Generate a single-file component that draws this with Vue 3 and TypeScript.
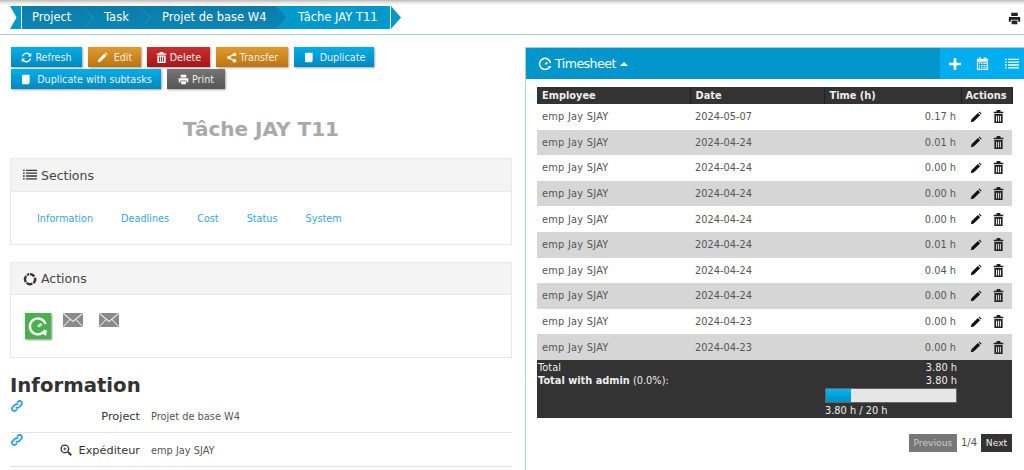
<template>
  <div class="page">
    <div class="topbar">
      <div class="crumbs">
        <span class="crumb-start"></span>
        <a v-for="(c, i) in crumbs" :key="c" class="crumb" :class="{ last: i === crumbs.length - 1 }">{{ c }}</a>
        <span class="crumb-end"></span>
      </div>
      <svg class="top-print" viewBox="0 0 16 16" width="13" height="13"><path :d="icons.print" fill="#222" /></svg>
    </div>

    <div class="columns">
      <div class="left">
        <div class="buttons">
          <a
            v-for="b in buttons"
            :key="b.label"
            class="btn"
            :class="[b.color, { spaced: b.spaced }]"
            :style="{ width: b.width + 'px' }"
          >
            <svg viewBox="0 0 16 16" width="11" height="11"><path :d="icons[b.icon]" fill="#fff" /></svg>
            {{ b.label }}
          </a>
        </div>

        <h2 class="title">Tâche JAY T11</h2>

        <section class="card sections">
          <header>
            <svg viewBox="0 0 16 16" width="14" height="14"><path :d="icons.list" fill="#333" /></svg>
            Sections
          </header>
          <nav class="links">
            <a v-for="l in links" :key="l">{{ l }}</a>
          </nav>
        </section>

        <section class="card actions">
          <header>
            <svg viewBox="0 0 16 16" width="14" height="14">
              <path d="M8 1a7 7 0 0 1 6 3.400L11.600 6A4.300 4.300 0 0 0 8 3.800zM15 6.200a7 7 0 0 1-2.300 7.500L11 11.600a4.300 4.300 0 0 0 1.200-4.700zM11.300 14.300a7 7 0 0 1-8 -.9L5 11.400a4.300 4.300 0 0 0 5 .6zM2.300 12.400A7 7 0 0 1 2.700 3.800l2 1.700a4.300 4.300 0 0 0-.2 5.200zM3.800 2.800a7 7 0 0 1 3.200-1.700v2.800a4.300 4.300 0 0 0-1.500.7z" fill="#333" />
            </svg>
            Actions
          </header>
          <div class="action-icons">
            <a class="green">
              <svg viewBox="0 0 26 26" width="26" height="26" fill="none" stroke="#fff" stroke-width="2.400">
                <path d="M20 17a8 8 0 1 1 .5-6" />
                <path d="M13 13.500l3.500-2.500" />
                <path d="M16 19.500l6-2.500-1 6z" stroke-width="0" fill="#fff" />
              </svg>
            </a>
            <svg v-for="n in 2" :key="n" class="mail" viewBox="0 0 20 14" width="20" height="14">
              <rect width="20" height="14" fill="#8a8a8a" />
              <path d="M0.500 0.500L10 8.500L19.500 0.500M0.500 13.500L7 6.500M19.500 13.500L13 6.500" fill="none" stroke="#e8e8e8" stroke-width="1.100" />
            </svg>
          </div>
        </section>

        <h2 class="info-title">Information</h2>
        <div v-for="f in fields" :key="f.label" class="field">
          <svg class="chain" viewBox="0 0 16 16" width="12" height="12">
            <path d="M6.500 9.500a3 3 0 0 0 4.300 0l3-3a3 3 0 0 0-4.300-4.300L8 3.700M9.500 6.500a3 3 0 0 0-4.300 0l-3 3a3 3 0 0 0 4.300 4.300L8 12.300" fill="none" stroke="#2a9fd6" stroke-width="2.200" />
          </svg>
          <div class="field-label">
            <svg v-if="f.search" viewBox="0 0 16 16" width="12" height="12" fill="none" stroke="#333" stroke-width="1.800">
              <circle cx="6.500" cy="6.500" r="5" />
              <path d="M10.500 10.500L15 15" stroke-width="2.600" />
              <path d="M4.500 6.500h4M6.500 4.500v4" stroke-width="1.200" />
            </svg>
            {{ f.label }}
          </div>
          <div class="field-value">{{ f.value }}</div>
        </div>
      </div>

      <div class="right">
        <div class="panel-head">
          <div class="panel-title">
            <svg viewBox="0 0 16 16" width="14" height="14" fill="none" stroke="#fff" stroke-width="1.700">
              <path d="M13.800 10.500A6.300 6.300 0 1 1 14.300 7" />
              <path d="M8 8.500l3-2.200" />
              <path d="M11.500 10.500h4l-2 3z" fill="#fff" stroke="none" />
            </svg>
            Timesheet
            <span class="caret"></span>
          </div>
          <div class="panel-tools">
            <svg viewBox="0 0 14 14" width="12" height="12"><path d="M5.500 0h3v5.500H14v3H8.500V14h-3V8.500H0v-3h5.500z" fill="#fff" /></svg>
            <svg viewBox="0 0 14 14" width="13" height="13"><path d="M1 2h2V0.500h2V2h4V0.500h2V2h2v12H1zM2 5v8h10V5zM3 6h1.500v1.500H3zM5.500 6H7v1.500H5.500zM8 6h1.500v1.500H8zM10 6h1.500v1.500H10zM3 8.500h1.500V10H3zM5.500 8.500H7V10H5.500zM8 8.500h1.500V10H8zM10 8.500h1.500V10H10zM3 11h1.500v1.500H3zM5.500 11H7v1.500H5.500zM8 11h1.500v1.500H8zM10 11h1.500v1.500H10z" fill="#fff" fill-rule="evenodd" /></svg>
            <svg viewBox="0 0 16 16" width="14" height="14"><path :d="icons.list" fill="#fff" /></svg>
          </div>
        </div>

        <div class="panel-body">
          <table class="sheet">
            <thead>
              <tr>
                <th class="c-emp">Employee</th>
                <th class="c-date">Date</th>
                <th class="c-time">Time (h)</th>
                <th class="c-act">Actions</th>
              </tr>
            </thead>
            <tbody>
              <tr v-for="(r, i) in rows" :key="i">
                <td class="name">emp Jay SJAY</td>
                <td>{{ r.date }}</td>
                <td class="num">{{ r.time }} h</td>
                <td class="row-actions">
                  <svg viewBox="0 0 16 16" width="12" height="12"><path d="M1 15l1-4 8.500-8.500 3 3L5 14zM11.500 1.500l1-1 3 3-1 1z" fill="#111" /></svg>
                  <svg class="trash" viewBox="0 0 16 16" width="11" height="13" preserveAspectRatio="none"><path :d="icons.trash" fill="#222" fill-rule="evenodd" /></svg>
                </td>
              </tr>
            </tbody>
            <tfoot>
              <tr>
                <td colspan="2" class="foot-left">
                  <div>Total</div>
                  <div><b>Total with admin</b> (0.0%):</div>
                </td>
                <td class="foot-right">
                  <div>3.80 h</div>
                  <div>3.80 h</div>
                  <div class="progress"><div class="progress-fill" :style="{ width: (3.8 / 20) * 100 + '%' }"></div></div>
                  <div class="progress-label">3.80 h / 20 h</div>
                </td>
                <td></td>
              </tr>
            </tfoot>
          </table>

          <div class="pager">
            <a class="prev">Previous</a>
            <span>1/4</span>
            <a class="next">Next</a>
          </div>
        </div>
      </div>
    </div>
  </div>
</template>

<script setup lang="ts">
const icons: Record<string, string> = {
  refresh: 'M13.500 3L15 1.500V6.500H10L12 4.500A5.500 5.500 0 0 0 3 6.500H1A7.500 7.500 0 0 1 13.500 3zM2.500 13L1 14.500V9.500H6L4 11.500A5.500 5.500 0 0 0 13 9.500H15A7.500 7.500 0 0 1 2.500 13z',
  edit: 'M1 15l1-4 8.500-8.500 3 3L5 14zM11.500 1.500l1-1 3 3-1 1z',
  trash: 'M5.500 0h5l.7 2H15v2H1V2h3.800zM2 5h12v11H2zM4.500 7v7H6V7zM7.300 7v7h1.400V7zM10 7v7h1.500V7z',
  share: 'M12.500 1a2.500 2.500 0 1 1-2 4L6.400 7.200a2.500 2.500 0 0 1 0 1.600l4.100 2.200a2.500 2.500 0 1 1-.7 1.400L5.500 10.200a2.500 2.500 0 1 1 0-4.400L9.800 3.400A2.500 2.500 0 0 1 12.500 1z',
  copy: 'M3 2.500Q3 1 4.500 1H14v11.500Q14 15 11.500 15H4.500Q3 15 3 13.500z',
  print: 'M4 1h8v4H4zM1 6h14v6h-2.500V9.500h-9V12H1zM4.500 10.500h7V15h-7z',
  list: 'M0 2h2v1.500H0zM3.500 2H16v1.500H3.500zM0 5.200h2v1.500H0zM3.500 5.200H16v1.500H3.500zM0 8.400h2v1.500H0zM3.500 8.400H16v1.500H3.500zM0 11.600h2v1.500H0zM3.500 11.600H16v1.500H3.500z',
}

const crumbs = ['Project', 'Task', 'Projet de base W4', 'Tâche JAY T11']

const buttons = [
  { label: 'Refresh', icon: 'refresh', color: 'blue', width: 71, spaced: false },
  { label: 'Edit', icon: 'edit', color: 'orange', width: 53, spaced: true },
  { label: 'Delete', icon: 'trash', color: 'red', width: 63, spaced: false },
  { label: 'Transfer', icon: 'share', color: 'orange', width: 72, spaced: false },
  { label: 'Duplicate', icon: 'copy', color: 'blue', width: 80, spaced: true },
  { label: 'Duplicate with subtasks', icon: 'copy', color: 'blue', width: 150, spaced: true },
  { label: 'Print', icon: 'print', color: 'grey', width: 58, spaced: false },
]

const links = ['Information', 'Deadlines', 'Cost', 'Status', 'System']

const fields = [
  { label: 'Project', value: 'Projet de base W4', search: false },
  { label: 'Expéditeur', value: 'emp Jay SJAY', search: true },
]

const rows = [
  { date: '2024-05-07', time: '0.17' },
  { date: '2024-04-24', time: '0.01' },
  { date: '2024-04-24', time: '0.00' },
  { date: '2024-04-24', time: '0.00' },
  { date: '2024-04-24', time: '0.00' },
  { date: '2024-04-24', time: '0.01' },
  { date: '2024-04-24', time: '0.04' },
  { date: '2024-04-24', time: '0.00' },
  { date: '2024-04-23', time: '0.00' },
  { date: '2024-04-23', time: '0.00' },
]
</script>

<style>
html, body {
  margin: 0;
  background: #fff;
  overflow: hidden;
}
</style>

<style scoped>
.page {
  width: 1024px;
  height: 470px;
  overflow: hidden;
  font-family: "DejaVu Sans", Verdana, sans-serif;
  font-size: 10.5px;
  color: #555;
  background: linear-gradient(#bbb 0, #ddd 2px, #fff 5px);
}

.topbar {
  height: 28px;
  padding-top: 6px;
  margin-bottom: 12px;
  border-bottom: 1px solid #a9cfdf;
  display: flex;
  justify-content: space-between;
}

.crumbs {
  display: flex;
  height: 23px;
  margin-left: 10px;
}

.crumb-start {
  width: 11px;
  height: 23px;
  margin-right: 1px;
  background: #0099cc;
  clip-path: polygon(0 0, 100% 0, 100% 100%, 0 100%, 60% 50%);
}

.crumb {
  position: relative;
  box-sizing: border-box;
  height: 23px;
  line-height: 22px;
  color: #fff;
  font-size: 11.5px;
  white-space: nowrap;
  background: linear-gradient(#0c7ba8, #0a86b6);
}

.crumb:nth-of-type(1) { width: 60px; padding-left: 10px; }
.crumb:nth-of-type(2) { width: 57px; padding-left: 22px; }
.crumb:nth-of-type(3) { width: 137px; padding-left: 23px; }

.crumb.last {
  width: 114px;
  padding-left: 22px;
  background: #0099cc;
}

/* chevron between two steps, with a faint light edge behind it */
.crumb:not(.last)::before {
  content: "";
  position: absolute;
  right: -12px;
  top: 0;
  width: 12px;
  height: 23px;
  z-index: 1;
  background: #2c9cc6;
  clip-path: polygon(0 0, 100% 50%, 0 100%);
}

.crumb:not(.last)::after {
  content: "";
  position: absolute;
  right: -11px;
  top: 0;
  width: 11px;
  height: 23px;
  z-index: 2;
  background: #0a82b1;
  clip-path: polygon(0 0, 100% 50%, 0 100%);
}

.crumb-end {
  width: 10px;
  height: 23px;
  margin-left: 1px;
  background: #0099cc;
  clip-path: polygon(0 0, 100% 50%, 0 100%);
}

.top-print {
  margin: 6px 3px 0 0;
}

.columns {
  display: flex;
}

.left {
  width: 502px;
  margin-left: 10px;
  flex: none;
}

.buttons {
  display: flex;
  flex-wrap: wrap;
  gap: 2px 6px;
  padding: 0 1px;
  width: 420px;
}

.btn {
  height: 20px;
  box-sizing: border-box;
  display: flex;
  align-items: center;
  justify-content: center;
  gap: 3px;
  color: #eee;
  font-size: 9.6px;
  white-space: nowrap;
  box-shadow: 1px 1px 2px rgba(0, 0, 0, 0.35);
}

.btn.spaced {
  gap: 6px;
}

.blue { background: linear-gradient(#00aee8, #0089bd); }
.orange { background: linear-gradient(#e09a2c, #bd7410); }
.red { background: linear-gradient(#c9302c, #a5161a); }
.grey { background: linear-gradient(#757575, #555); }

.title {
  margin: 28px 0 0;
  height: 41px;
  text-align: center;
  font-size: 20px;
  line-height: 24px;
  font-weight: bold;
  color: #a9a9a9;
}

.card {
  border: 1px solid #e8e8e8;
  background: #fff;
}

.card header {
  background: #f4f4f4;
  border-bottom: 1px solid #eaeaea;
  height: 31px;
  display: flex;
  align-items: center;
  gap: 4px;
  padding-left: 12px;
  font-size: 12.5px;
  color: #444;
}

.sections {
  height: 87px;
  box-sizing: border-box;
  margin-bottom: 17px;
}

.sections header {
  height: 32px;
}

.links {
  display: flex;
  gap: 28px;
  padding: 21px 0 0 26px;
  color: #35a7d6;
  font-size: 9.7px;
}

.actions {
  height: 96px;
  box-sizing: border-box;
}

.action-icons {
  display: flex;
  align-items: flex-start;
  padding: 18px 0 0 14px;
}

.green {
  width: 26px;
  height: 26px;
  background: #4caf50;
  box-shadow: 1px 1px 2px rgba(0, 0, 0, 0.45);
  flex: none;
}

.green svg {
  display: block;
}

.mail {
  margin-left: 12px;
}

.mail + .mail {
  margin-left: 16px;
}

.info-title {
  margin: 16px 0 1px;
  font-size: 19.7px;
  line-height: 24px;
  font-weight: bold;
  color: #333;
}

.field {
  position: relative;
  display: flex;
  height: 34px;
  box-sizing: border-box;
  border-bottom: 1px solid #e2e2e2;
  align-items: center;
  padding-top: 1px;
}

.chain {
  position: absolute;
  left: 1px;
  top: 1px;
}

.field-label {
  width: 130px;
  display: flex;
  justify-content: flex-end;
  align-items: center;
  gap: 7px;
  color: #333;
  font-size: 11.3px;
}

.field-value {
  margin-left: 11px;
  font-size: 9.8px;
  color: #555;
}

.right {
  margin-left: 13px;
  flex: 1;
  height: 424px;
  border-left: 1px solid #a9cfdf;
  border-top: 1px solid #a9cfdf;
}

.panel-head {
  height: 31px;
  background: #0096cb;
  display: flex;
  justify-content: space-between;
  color: #fff;
}

.panel-title {
  display: flex;
  align-items: center;
  gap: 3px;
  padding-left: 12px;
  font-size: 12.5px;
  letter-spacing: -0.5px;
}

.caret {
  width: 0;
  height: 0;
  margin-left: 1px;
  border: 4px solid transparent;
  border-top: 0;
  border-bottom: 4px solid #fff;
}

.panel-tools {
  width: 85px;
  background: #00aeef;
  display: flex;
  align-items: center;
  justify-content: space-between;
  padding: 0 6px 0 9px;
  box-sizing: border-box;
}

.panel-body {
  padding: 8px 12px 0 11px;
}

.sheet {
  width: 475px;
  border-collapse: collapse;
  table-layout: fixed;
  font-size: 9.8px;
}

.sheet th {
  background: #333;
  color: #eee;
  height: 17px;
  padding: 0 0 0 5px;
  font-weight: bold;
  text-align: left;
  border-right: 1px solid #222;
  box-sizing: border-box;
}

.c-emp { width: 153px; }
.c-date { width: 134px; }
.c-time { width: 137px; }
.c-act { width: 51px; }

.sheet th.c-act {
  padding-left: 4px;
}

.sheet tbody tr {
  height: 25.6px;
}

.sheet tbody tr:nth-child(even) {
  background: #d6d6d6;
}

.sheet tbody td {
  padding: 0 0 0 5px;
  color: #555;
}

.sheet tbody td.name {
  letter-spacing: 0.25px;
}

.sheet .num {
  text-align: right;
  padding-right: 5px;
}

.row-actions {
  white-space: nowrap;
}

.row-actions svg {
  vertical-align: middle;
  margin-left: 4px;
  margin-right: 8px;
}

.row-actions svg.trash {
  margin-left: 3px;
}

.sheet tfoot td {
  background: #333;
  color: #eee;
  vertical-align: top;
  line-height: 13px;
  padding: 1px 0 1px 1px;
  font-size: 9.8px;
}

.foot-right {
  text-align: right;
}

.sheet tfoot .foot-right {
  padding-right: 4px;
}

.progress {
  width: 132px;
  height: 15px;
  margin: 1px 0 1px auto;
  background: #e6e6e6;
  border: 1px solid #666;
  box-sizing: border-box;
}

.progress-fill {
  height: 100%;
  background: linear-gradient(#00b4ee, #0090c8);
}

.progress-label {
  width: 132px;
  margin-left: auto;
  text-align: left;
}

.pager {
  display: flex;
  justify-content: flex-end;
  align-items: center;
  gap: 4px;
  width: 475px;
  margin-top: 16px;
  font-size: 10px;
  color: #555;
}

.pager a {
  height: 18px;
  line-height: 18px;
  font-size: 9.2px;
  text-align: center;
}

.prev {
  width: 48px;
  background: #777;
  color: #ccc;
}

.next {
  width: 31px;
  background: #333;
  color: #eee;
}
</style>
